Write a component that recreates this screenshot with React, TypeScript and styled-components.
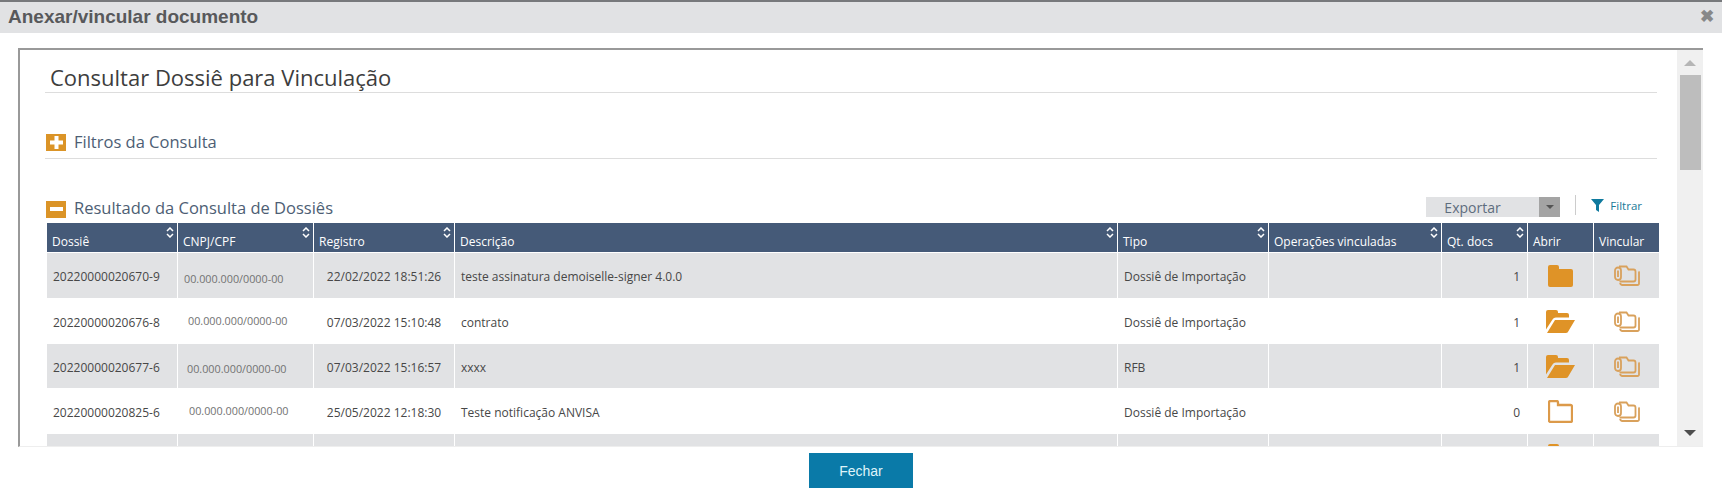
import React from "react";
import styled, { createGlobalStyle } from "styled-components";

const Global = createGlobalStyle`
  html, body { margin: 0; padding: 0; background: #fff; }
  * { box-sizing: border-box; }
`;
const Page = styled.div`
  width: 1722px; height: 502px; overflow: hidden; display: flex; flex-direction: column;
  font-family: "Open Sans", sans-serif; background: #fff;
`;
const TitleBar = styled.header`
  height: 33px; flex: none; background: #e1e2e4; border-top: 2px solid #77797c;
  display: flex; align-items: center; justify-content: space-between; padding: 0 8px 2px 8px;
  font: bold 19px "Liberation Sans", sans-serif; color: #58595b;
`;
const Close = styled.span`
  font-size: 17px; color: #888; line-height: 1;
`;
const Frame = styled.div`
  margin: 15px 19px 0 18px; height: 399px; flex: none; display: flex;
  border-top: 2px solid #999; border-left: 2px solid #999; border-bottom: 1px solid #eee;
`;
const Content = styled.div`
  flex: 1; min-width: 0; overflow: hidden; padding: 0 20px 0 25px;
`;
const Heading = styled.h1`
  margin: 0; height: 43px; border-bottom: 1px solid #ddd; padding: 12px 0 0 5px;
  font-weight: 400; font-size: 22px; line-height: 30px; color: #3d3d3d;
`;
const Section = styled.div<{ $top: number; $line?: boolean }>`
  margin-top: ${p => p.$top}px; height: 33px; display: flex; align-items: center; gap: 8px;
  border-bottom: ${p => (p.$line ? "1px solid #ddd" : "none")}; padding: 1px 0 0 1px;
`;
const Toggle = styled.span`
  width: 20px; height: 17px; background: #db9427; display: flex; align-items: center; justify-content: center; flex: none;
`;
const SectionTitle = styled.span`
  font-size: 16.5px; font-weight: 500; color: #4d5e74; line-height: 20px; margin-top: -2px;
`;
const Tools = styled.div`
  margin-left: auto; display: flex; align-items: center; margin-right: 15px; margin-bottom: 4px;
`;
const Export = styled.div`
  width: 134px; height: 20px; background: #e1e2e4; display: flex; justify-content: space-between;
  font-size: 14px; line-height: 21px; color: #5e6d7e; padding-left: 18px;
`;
const Caret = styled.span`
  width: 21px; height: 20px; background: #a4a4a4; display: flex; align-items: center; justify-content: center;
  &::after { content: ""; border: 4px solid transparent; border-top: 4px solid #555; margin-top: 4px; }
`;
const Separator = styled.span`
  width: 1px; height: 20px; background: #ccc; margin: -4px 15px 0 15px;
`;
const Filter = styled.span`
  display: flex; align-items: center; gap: 6px; font-size: 11.5px; color: #1a7a98; margin-top: -4px;
`;
const Table = styled.table`
  border-collapse: separate; border-spacing: 0; table-layout: fixed; width: 1612px; margin: -2px 0 0 2px;
`;
const Th = styled.th<{ $w: number }>`
  width: ${p => p.$w}px; height: 30px; background: #455a78; color: #fff; font-weight: 400; font-size: 12px;
  text-align: left; padding: 8px 0 0 5px; border-right: 1px solid #fff; border-bottom: 1px solid #fff; position: relative;
  &:last-child { border-right: none; }
`;
const SortMark = styled.svg`
  position: absolute; right: 3px; top: 4px; width: 8px; height: 11px;
`;
const Row = styled.tr<{ $odd: boolean; $h: number }>`
  height: ${p => p.$h}px; background: ${p => (p.$odd ? "#e1e2e4" : "#fff")};
`;
const Td = styled.td<{ $align?: string }>`
  font-size: 12px; color: #474747; padding: 2px 6px 0; border-right: 1px solid #fff; white-space: nowrap;
  text-align: ${p => p.$align ?? "left"};
  &:last-child { border-right: none; }
`;
const Masked = styled.span<{ $dx: number; $dy: number }>`
  display: inline-block; font-size: 10.8px; color: #727272; transform: translate(${p => p.$dx}px, ${p => p.$dy}px);
`;
const Right = styled(Td)`
  text-align: right; padding-right: 7px;
`;
const IconCell = styled(Td)`
  text-align: center; padding: 0; line-height: 0;
`;
const Track = styled.div`
  width: 26px; flex: none; background: #f0f0f0; display: flex; flex-direction: column; align-items: center; padding-top: 10px;
`;
const ArrowUp = styled.span`
  border: 6px solid transparent; border-top: none; border-bottom: 6px solid #b5b5b5; width: 0; height: 0;
`;
const Thumb = styled.div`
  width: 21px; height: 95px; background: #bdbdbd; margin-top: 9px;
`;
const ArrowDown = styled.span`
  margin-top: auto; margin-bottom: 10px; border: 6px solid transparent; border-bottom: none; border-top: 6px solid #4d4d4d; width: 0; height: 0;
`;
const Footer = styled.div`
  display: flex; justify-content: center; padding-top: 6px;
`;
const CloseButton = styled.button`
  width: 104px; height: 35px; border: none; background: #0a7aa8; color: #dff4fa; font-size: 14px; font-family: "Liberation Sans", sans-serif;
`;

const ClosedFolder = () => (
  <svg width="25" height="22" viewBox="0 0 25 22"><path d="M0 2a2 2 0 0 1 2-2h7a2 2 0 0 1 2 2v2h12a2 2 0 0 1 2 2v14a2 2 0 0 1-2 2H2a2 2 0 0 1-2-2z" fill="#df9327"/></svg>
);
const OpenFolder = () => (
  <svg width="29" height="23" viewBox="0 0 29 23"><path d="M0 2a2 2 0 0 1 2-2h8a2 2 0 0 1 2 2v1h9a2 2 0 0 1 2 2v2.500H10a4 4 0 0 0-3.500 2L0 19.500z" fill="#df9327"/><path d="M9 10h20l-6.500 11a3 3 0 0 1-2.500 2H1z" fill="#df9327"/></svg>
);
const EmptyFolder = () => (
  <svg width="25" height="23" viewBox="0 0 25 23"><path d="M1 2.500a1.500 1.500 0 0 1 1.500-1.500h6a1.500 1.500 0 0 1 1.500 1.500v2.500h12.500a1.500 1.500 0 0 1 1.500 1.500v14a1.500 1.500 0 0 1-1.500 1.500h-20a1.500 1.500 0 0 1-1.500-1.500z" fill="none" stroke="#dc9a4a" strokeWidth="2.300"/></svg>
);
const Attach = () => (
  <svg width="26" height="21" viewBox="0 0 26 21" fill="none" stroke="#d9a15c" strokeWidth="1.800">
    <path d="M5 1.500h7.500l2 3h5a2 2 0 0 1 2 2v8a2 2 0 0 1-2 2H5.500" />
    <path d="M24.500 6.500a1 1 0 0 1 .5 1v11a1.500 1.500 0 0 1-1.500 1.500H8a2.500 2.500 0 0 1-2-2" />
    <rect x="1" y="2.500" width="6" height="12.500" rx="3"/>
    <path d="M4 5.500v6.500" />
  </svg>
);
const Sort = () => (
  <SortMark viewBox="0 0 8 11" fill="none" stroke="#fff" strokeWidth="1.500"><path d="M1 4l3-3 3 3M1 7l3 3 3-3"/></SortMark>
);

const columns: [string, number, boolean][] = [
  ["Dossiê", 131, true], ["CNPJ/CPF", 136, true], ["Registro", 141, true], ["Descrição", 663, true],
  ["Tipo", 151, true], ["Operações vinculadas", 173, true], ["Qt. docs", 86, true], ["Abrir", 66, false], ["Vincular", 65, false],
];
const rows = [
  { h: 45, id: "20220000020670-9", dx: 0, dy: 2, reg: "22/02/2022 18:51:26", desc: "teste assinatura demoiselle-signer 4.0.0", tipo: "Dossiê de Importação", qt: "1", Icon: ClosedFolder },
  { h: 46, id: "20220000020676-8", dx: 4, dy: -2, reg: "07/03/2022 15:10:48", desc: "contrato", tipo: "Dossiê de Importação", qt: "1", Icon: OpenFolder },
  { h: 44, id: "20220000020677-6", dx: 3, dy: 1, reg: "07/03/2022 15:16:57", desc: "xxxx", tipo: "RFB", qt: "1", Icon: OpenFolder },
  { h: 46, id: "20220000020825-6", dx: 5, dy: -2, reg: "25/05/2022 12:18:30", desc: "Teste notificação ANVISA", tipo: "Dossiê de Importação", qt: "0", Icon: EmptyFolder },
];

export default function App() {
  return (
    <Page>
      <Global />
      <TitleBar>Anexar/vincular documento<Close>✖</Close></TitleBar>
      <Frame>
        <Content>
          <Heading>Consultar Dossiê para Vinculação</Heading>
          <Section $top={33} $line>
            <Toggle><svg width="13" height="13" viewBox="0 0 13 13"><path d="M4.500 0h4v4.500h4.500v4H8.500V13h-4V8.500H0v-4h4.500z" fill="#fff"/></svg></Toggle>
            <SectionTitle>Filtros da Consulta</SectionTitle>
          </Section>
          <Section $top={33}>
            <Toggle><svg width="13" height="4" viewBox="0 0 13 4"><path d="M0 0h13v4H0z" fill="#fff"/></svg></Toggle>
            <SectionTitle>Resultado da Consulta de Dossiês</SectionTitle>
            <Tools>
              <Export>Exportar<Caret /></Export>
              <Separator />
              <Filter>
                <svg width="13" height="13" viewBox="0 0 13 13"><path d="M0 0h13L8 6v7L5 11V6z" fill="#0f7a9e"/></svg>
                Filtrar
              </Filter>
            </Tools>
          </Section>
          <Table>
            <thead>
              <tr>{columns.map(([n, w, s]) => <Th key={n} $w={w}>{n}{s && <Sort />}</Th>)}</tr>
            </thead>
            <tbody>
              {rows.map((r, i) => (
                <Row key={r.id} $odd={i % 2 === 0} $h={r.h}>
                  <Td>{r.id}</Td>
                  <Td><Masked $dx={r.dx} $dy={r.dy}>00.000.000/0000-00</Masked></Td>
                  <Td $align="center">{r.reg}</Td>
                  <Td>{r.desc}</Td>
                  <Td>{r.tipo}</Td>
                  <Td />
                  <Right>{r.qt}</Right>
                  <IconCell><r.Icon /></IconCell>
                  <IconCell><Attach /></IconCell>
                </Row>
              ))}
              <Row $odd $h={42}><Td /><Td /><Td /><Td /><Td /><Td /><Td /><IconCell><ClosedFolder /></IconCell><Td /></Row>
            </tbody>
          </Table>
        </Content>
        <Track><ArrowUp /><Thumb /><ArrowDown /></Track>
      </Frame>
      <Footer><CloseButton>Fechar</CloseButton></Footer>
    </Page>
  );
}
